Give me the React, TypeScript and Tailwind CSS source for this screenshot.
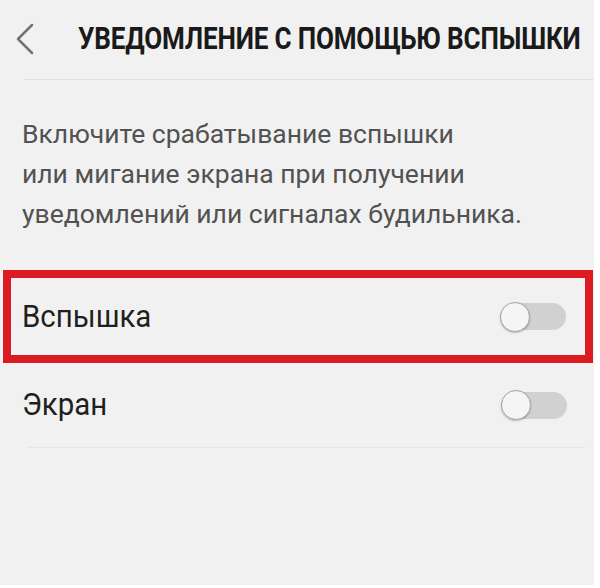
const font = { fontFamily: "Roboto, 'Noto Sans', sans-serif" };

function Toggle() {
  return (
    <div className="relative w-[66px] h-[32px] flex items-center shrink-0">
      <div className="ml-[6px] w-[60px] h-[27px] rounded-full bg-[#d1d1d1]" />
      <div className="absolute left-0 top-[1px] w-[30px] h-[30px] rounded-full bg-[#f5f5f5] border border-[#a6a6a6] shadow-[0_1px_2px_rgba(0,0,0,0.25)]" />
    </div>
  );
}

export default function App() {
  return (
    <div className="w-[600px] h-[588px] bg-white" style={font}>
      <div className="w-[594px] h-[585px] bg-[#f1f1f1]">
        <header className="h-[79px] flex items-center">
          <div className="w-[78px] shrink-0 flex items-center">
            <svg
              width="22"
              height="32"
              viewBox="0 0 22 32"
              className="ml-[14px] mt-[-2px]"
              fill="none"
              stroke="#6f7575"
              strokeWidth="2.5"
              strokeLinecap="round"
              strokeLinejoin="round"
            >
              <polyline points="18,2 4,16 18,30" />
            </svg>
          </div>
          <h1 className="text-[31px] font-bold text-[#1a1a1a] whitespace-nowrap origin-left scale-x-[0.84] tracking-[-0.2px]">
            УВЕДОМЛЕНИЕ С ПОМОЩЬЮ ВСПЫШКИ
          </h1>
        </header>
        <div className="ml-[24px] h-px bg-[#e3e3e3]" />

        <p className="mt-[34px] pl-[22px] text-[26.5px] leading-[40px] text-[#525252]">
          Включите срабатывание вспышки
          <br />
          или мигание экрана при получении
          <br />
          уведомлений или сигналах будильника.
        </p>

        <div className="mt-[36px] ml-[3px] w-[590px] h-[93px] border-[8px] border-[#dc1a22] flex items-center justify-between pl-[11px] pr-[19px]">
          <span className="text-[31px] text-[#1f1f1f] origin-left scale-x-[0.95] mt-[2px]">
            Вспышка
          </span>
          <Toggle />
        </div>

        <div className="h-[84px] flex items-center justify-between pl-[22px] pr-[27px]">
          <span className="text-[31px] text-[#1f1f1f] origin-left scale-x-[0.95]">
            Экран
          </span>
          <Toggle />
        </div>
        <div className="ml-[28px] mr-[8px] h-px bg-[#e6e6e6]" />
      </div>
    </div>
  );
}
